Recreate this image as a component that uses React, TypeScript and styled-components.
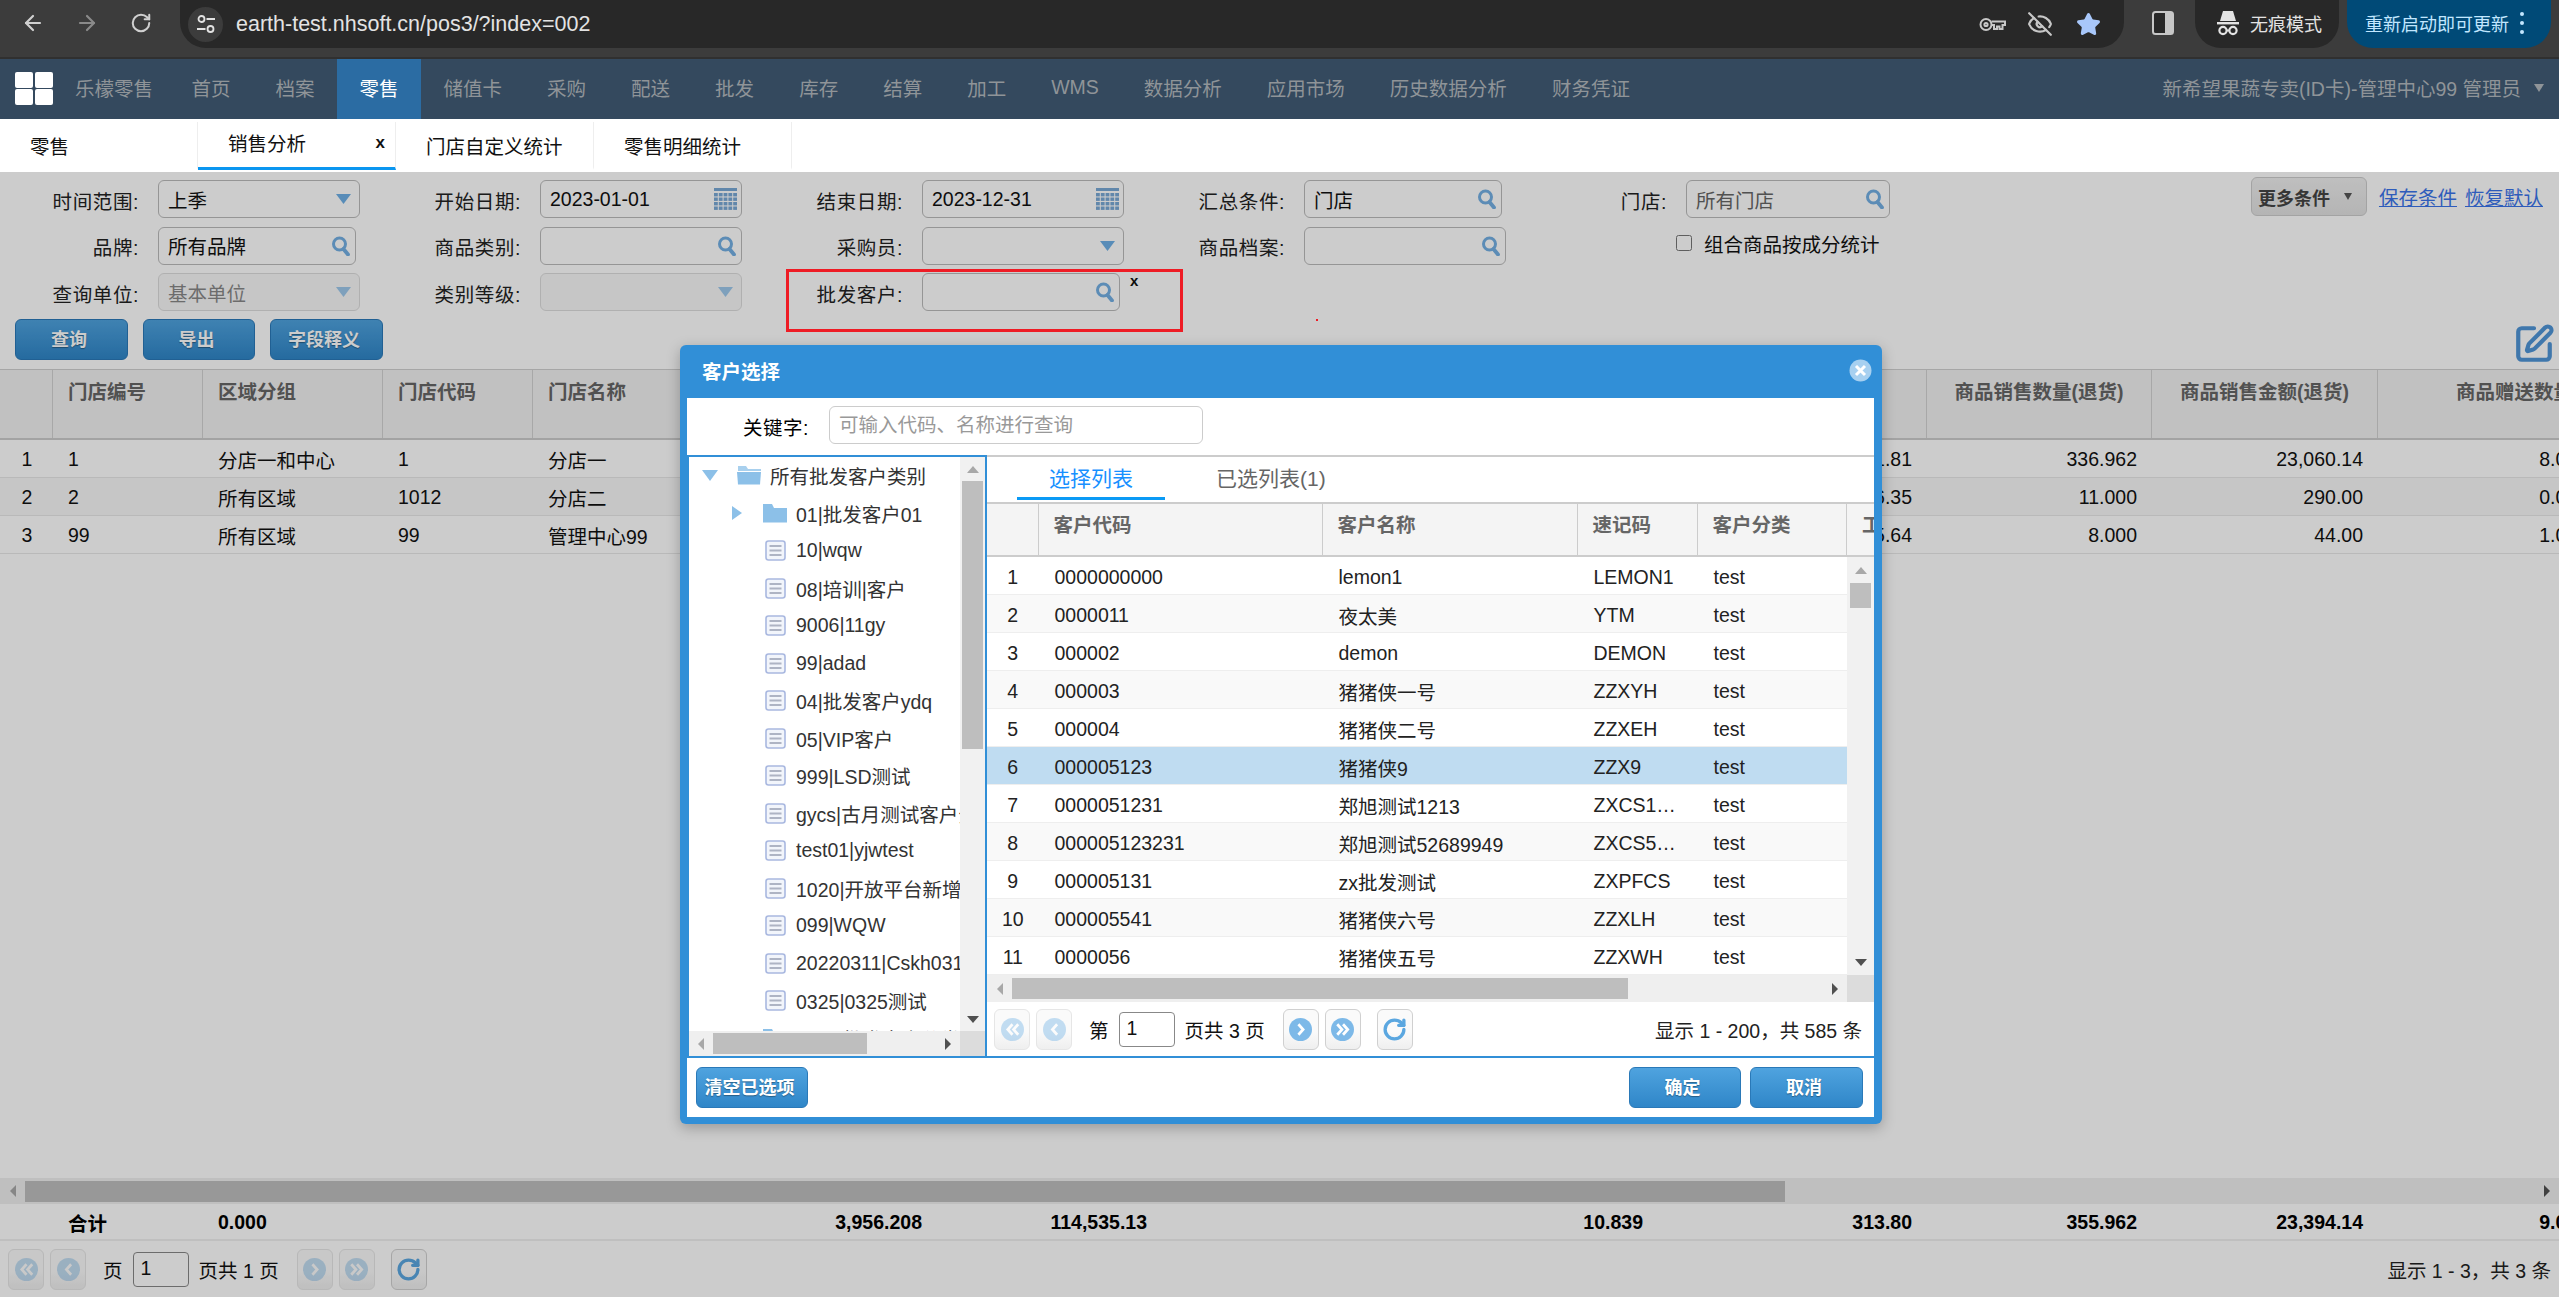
import React from 'react';
import styled, { createGlobalStyle } from 'styled-components';
import { ArrowLeft, ArrowRight, RotateCw, EyeOff, Star, SquarePen } from 'lucide-react';

const BLUE = '#318fd7';

const GlobalStyle = createGlobalStyle`
  html, body {
    margin: 0;
    width: 2559px;
    height: 1297px;
    overflow: hidden;
    background: #fff;
  }
  body, input, button {
    font-family: "Liberation Sans", "Noto Sans CJK SC", sans-serif;
    font-size: 19.5px;
    color: #222;
  }
  * { box-sizing: border-box; }
`;

const Page = styled.div`
  width: 2559px;
  height: 1297px;
  display: flex;
  flex-direction: column;
  overflow: hidden;
`;

/* browser bar */
const BrowserBar = styled.div`
  height: 59px;
  flex: none;
  display: flex;
  align-items: flex-start;
  padding-left: 6px;
  background: #3c3c3c;
  border-bottom: 2px solid #303030;
`;

const ChromeButton = styled.div<{ $dim?: boolean }>`
  width: 54px;
  height: 46px;
  display: flex;
  align-items: center;
  justify-content: center;
  color: ${p => (p.$dim ? '#8a8a8a' : '#d0d0d0')};
`;

const AddressBar = styled.div`
  width: 1944px;
  height: 48px;
  margin-left: 12px;
  padding: 0 12px 0 8px;
  display: flex;
  align-items: center;
  background: #282828;
  border-radius: 0 0 26px 26px;
`;

const TuneBadge = styled.div`
  width: 35px;
  height: 35px;
  border-radius: 50%;
  background: #3c3c3c;
  display: flex;
  align-items: center;
  justify-content: center;
`;

const Url = styled.span`
  margin-left: 13px;
  font-size: 21.5px;
  color: #e3e3e3;
`;

const AddressIcons = styled.div`
  margin-left: auto;
  display: flex;
`;

const AddressIcon = styled.div`
  width: 48px;
  height: 48px;
  display: flex;
  align-items: center;
  justify-content: center;
  color: #c7c7c7;
`;

const SidePanel = styled.div`
  margin: 11px 0 0 28px;
  line-height: 0;
`;

const Pill = styled.div<{ $update?: boolean }>`
  height: 48px;
  display: flex;
  align-items: center;
  margin-left: ${p => (p.$update ? '8px' : '21px')};
  width: ${p => (p.$update ? '204px' : '144px')};
  padding: 0 0 2px ${p => (p.$update ? '18px' : '21px')};
  gap: ${p => (p.$update ? '11px' : '10px')};
  font-size: 18px;
  color: ${p => (p.$update ? '#c2e7ff' : '#e3e3e3')};
  background: ${p => (p.$update ? '#004a77' : '#282828')};
  border-radius: 0 0 26px 26px;
`;

const UpdateDots = styled.div`
  display: flex;
  flex-direction: column;
  gap: 5px;
  i {
    width: 4px;
    height: 4px;
    border-radius: 50%;
    background: #c2e7ff;
  }
`;

/* app nav */
const Nav = styled.div`
  height: 60px;
  flex: none;
  display: flex;
  background: #34495e;
`;

const Logo = styled.div`
  margin: 13px 0 0 15px;
  width: 38px;
  height: 33px;
  display: grid;
  grid-template-columns: 18px 18px;
  grid-auto-rows: 16px;
  gap: 1px 2px;
  i {
    background: #fff;
    border-radius: 2px;
  }
`;

const NavItem = styled.div<{ $active?: boolean; $brand?: boolean }>`
  display: flex;
  align-items: center;
  padding: ${p => (p.$brand ? '0 16px 3px 22px' : '0 22.5px 3px')};
  color: ${p => (p.$active ? '#fff' : '#8f9498')};
  background: ${p => (p.$active ? '#2b6ca3' : 'transparent')};
  white-space: nowrap;
`;

const NavUser = styled.div`
  margin-left: auto;
  padding: 0 15px 3px 0;
  display: flex;
  align-items: center;
  color: #8f9498;
  white-space: nowrap;
  &::after {
    content: '';
    margin-left: 13px;
    border-style: solid;
    border-width: 8px 5px 0 5px;
    border-color: #8f9498 transparent transparent transparent;
  }
`;

/* page tabs */
const TabBar = styled.div`
  height: 53px;
  flex: none;
  display: flex;
  padding: 3px 0 2px;
  background: #fff;
`;

const PageTab = styled.div<{ $active?: boolean }>`
  width: 198px;
  display: flex;
  align-items: center;
  justify-content: space-between;
  padding: ${p => (p.$active ? '0 10px 4px 30px' : '2px 10px 0 30px')};
  border-right: 1px solid #eee;
  border-bottom: 3px solid ${p => (p.$active ? '#0a96f0' : 'transparent')};
  color: #111;
  white-space: nowrap;
  b {
    font-size: 17px;
  }
`;

/* content under the mask */
const Content = styled.div`
  flex: 1;
  min-height: 0;
  position: relative;
  display: flex;
  flex-direction: column;
`;

const Mask = styled.div`
  position: absolute;
  inset: 0;
  z-index: 10;
  background: rgba(0, 0, 0, 0.2);
`;

const FilterArea = styled.div`
  height: 197px;
  flex: none;
  display: flex;
`;

const FilterLeft = styled.div`
  width: 1910px;
  flex: none;
  padding-top: 8px;
`;

const FilterGrid = styled.div`
  display: grid;
  grid-template-columns: repeat(5, 382px);
  grid-auto-rows: 38px;
  row-gap: 8.5px;
`;

const FieldCell = styled.div<{ $flagged?: boolean }>`
  position: relative;
  display: flex;
  align-items: center;
  ${p =>
    p.$flagged &&
    `&::after {
      content: '';
      box-sizing: border-box;
      position: absolute;
      left: 22px;
      top: -4px;
      width: 397px;
      height: 63px;
      border: 3px solid #ee1c25;
      z-index: 11;
    }`}
`;

const FieldLabel = styled.label`
  width: 139px;
  flex: none;
  margin-right: 19px;
  padding-top: 2px;
  text-align: right;
  white-space: nowrap;
  letter-spacing: 0.6px;
  color: #222;
`;

const Control = styled.div<{ $w?: number; $off?: boolean }>`
  width: ${p => p.$w ?? 202}px;
  height: 38px;
  display: flex;
  align-items: center;
  justify-content: space-between;
  padding: 0 4px 0 9px;
  background: ${p => (p.$off ? '#f8f8f8' : 'transparent')};
  border: 1px solid ${p => (p.$off ? '#ddd' : '#bbb')};
  border-radius: 6px;
  white-space: nowrap;
  color: ${p => (p.$off ? '#888' : '#111')};
`;

const PlaceholderText = styled.span`
  color: #666;
`;

const Dismiss = styled.span`
  align-self: flex-start;
  margin: -1px 0 0 10px;
  font-size: 15px;
  font-weight: bold;
  color: #111;
`;

const Speck = styled.span`
  display: block;
  position: relative;
  z-index: 11;
  width: 2px;
  height: 2px;
  margin: 46px 0 0 170px;
  background: #ee1c25;
`;

const CheckLine = styled.label`
  display: flex;
  align-items: center;
  padding: 0 0 5px 148px;
  color: #111;
  white-space: nowrap;
  input {
    width: 16px;
    height: 16px;
    margin: 0 12px 0 0;
  }
`;

const ActionRow = styled.div`
  display: flex;
  gap: 15px;
  margin-top: 8px;
  padding-left: 15px;
`;

const BlueButton = styled.button<{ $w: number }>`
  width: ${p => p.$w}px;
  height: 41px;
  padding: 0 5px 3px 0;
  font-size: 18px;
  font-weight: bold;
  color: #fff;
  text-shadow: 0 1px 1px rgba(0, 0, 0, 0.35);
  background: linear-gradient(#4fa3df, #2f86c8);
  border: 1px solid #2a79b8;
  border-radius: 6px;
`;

const FilterRight = styled.div`
  flex: 1;
  display: flex;
  flex-direction: column;
  padding: 5px 4px 4px 0;
`;

const TopTools = styled.div`
  display: flex;
  align-items: center;
  justify-content: flex-end;
  padding-right: 12px;
`;

const MoreButton = styled.div`
  width: 116px;
  height: 39px;
  display: flex;
  align-items: center;
  padding-left: 6px;
  gap: 14px;
  font-size: 18px;
  font-weight: bold;
  color: #444;
  background: linear-gradient(#efefef, #e2e2e2);
  border: 1px solid #ccc;
  border-radius: 6px;
  &::after {
    content: '';
    border-style: solid;
    border-width: 7px 4px 0 4px;
    border-color: #555 transparent transparent transparent;
  }
`;

const SaveLink = styled.a`
  margin-left: 12px;
  color: #3a74ea;
  text-decoration: underline;
  white-space: nowrap;
  & + & {
    margin-left: 8px;
  }
`;

const EditIcon = styled.div`
  margin-top: auto;
  align-self: flex-end;
  line-height: 0;
  color: #4f95d8;
`;

/* main table */
const MAIN_COLS = '53px 150px 180px 150px 404px 225px 225px 271px 269px 225px 226px 225px';

const TableWrap = styled.div`
  flex: 1;
  min-height: 0;
  overflow: hidden;
`;

const HeadRow = styled.div`
  height: 71px;
  display: grid;
  grid-template-columns: ${MAIN_COLS};
  background: #f2f2f2;
  border-top: 1px solid #d0d0d0;
  border-bottom: 2px solid #ccc;
`;

const HeadCell = styled.div<{ $center?: boolean; $indent?: number }>`
  padding: 9px 0 0 ${p => p.$indent ?? 15}px;
  line-height: 26px;
  font-weight: bold;
  color: #666;
  white-space: nowrap;
  border-right: 1px solid #d2d2d2;
  ${p => p.$center && 'padding-left: 0; text-align: center;'}
`;

const BodyRow = styled.div<{ $stripe?: boolean }>`
  height: 38px;
  display: grid;
  grid-template-columns: ${MAIN_COLS};
  align-items: center;
  color: #111;
  background: ${p => (p.$stripe ? '#f8f8f8' : '#fff')};
  border-bottom: 1px solid #e8e8e8;
`;

const SummaryRow = styled(BodyRow)`
  flex: none;
  height: 37px;
  font-weight: bold;
  color: #000;
  border-bottom: 2px solid #efefef;
`;

const BodyCell = styled.div<{ $right?: boolean; $center?: boolean }>`
  padding: 2px 15px 0;
  text-align: ${p => (p.$right ? 'right' : p.$center ? 'center' : 'left')};
  white-space: nowrap;
  ${p => p.$center && 'padding: 2px 0 0 1px;'}
`;

/* scrollbars */
const VTrack = styled.div<{ $w: number }>`
  width: ${p => p.$w}px;
  flex: none;
  display: flex;
  flex-direction: column;
  align-items: center;
  background: #f1f1f1;
`;

const HTrack = styled.div<{ $h: number }>`
  height: ${p => p.$h}px;
  flex: 1;
  min-width: 0;
  display: flex;
  align-items: center;
  background: #efefef;
`;

const ArrowBox = styled.div<{ $size: number; $vertical?: boolean }>`
  flex: none;
  display: flex;
  align-items: center;
  justify-content: center;
  ${p => (p.$vertical ? `height: ${p.$size}px; width: 100%;` : `width: ${p.$size}px; height: 100%;`)}
`;

const Thumb = styled.div<{ $len: number; $cross: number; $vertical?: boolean }>`
  flex: none;
  background: #bebebe;
  ${p =>
    p.$vertical
      ? `height: ${p.$len}px; width: ${p.$cross}px;`
      : `width: ${p.$len}px; height: ${p.$cross}px;`}
`;

const Gap = styled.div`
  flex: 1;
`;

const Tri = styled.i<{ $dir: 'up' | 'down' | 'left' | 'right'; $off?: boolean }>`
  width: 0;
  height: 0;
  border-style: solid;
  ${p => {
    const c = p.$off ? '#a8a8a8' : '#505050';
    if (p.$dir === 'up') return `border-width: 0 6px 7px 6px; border-color: transparent transparent ${c} transparent;`;
    if (p.$dir === 'down') return `border-width: 7px 6px 0 6px; border-color: ${c} transparent transparent transparent;`;
    if (p.$dir === 'left') return `border-width: 6px 6px 6px 0; border-color: transparent ${c} transparent transparent;`;
    return `border-width: 6px 0 6px 6px; border-color: transparent transparent transparent ${c};`;
  }}
`;

const ScrollCorner = styled.div<{ $w: number }>`
  width: ${p => p.$w}px;
  flex: none;
  background: #dcdcdc;
`;

const HBarRow = styled.div`
  flex: none;
  display: flex;
`;

function VScroll({ w, arrow, len, cross }: { w: number; arrow: number; len: number; cross: number }) {
  return (
    <VTrack $w={w}>
      <ArrowBox $size={arrow} $vertical><Tri $dir="up" $off /></ArrowBox>
      <Thumb $vertical $len={len} $cross={cross} />
      <Gap />
      <ArrowBox $size={arrow} $vertical><Tri $dir="down" /></ArrowBox>
    </VTrack>
  );
}

function HScroll({ h, arrow, len, cross }: { h: number; arrow: number; len: number; cross: number }) {
  return (
    <HTrack $h={h}>
      <ArrowBox $size={arrow}><Tri $dir="left" $off /></ArrowBox>
      <Thumb $len={len} $cross={cross} />
      <Gap />
      <ArrowBox $size={arrow}><Tri $dir="right" /></ArrowBox>
    </HTrack>
  );
}

/* pager */
const PagerBar = styled.div<{ $h: number; $pad: number; $end: number }>`
  height: ${p => p.$h}px;
  flex: none;
  display: flex;
  align-items: center;
  gap: 6px;
  padding: 0 ${p => p.$end}px 0 ${p => p.$pad}px;
  white-space: nowrap;
`;

const PageButton = styled.div<{ $off?: boolean; $gapLeft?: number }>`
  width: 36px;
  height: 41px;
  flex: none;
  display: flex;
  align-items: center;
  justify-content: center;
  margin-left: ${p => p.$gapLeft ?? 0}px;
  background: linear-gradient(#fafafa 55%, #efefef);
  border: 1px solid ${p => (p.$off ? '#e6e6e6' : '#d0d0d0')};
  border-radius: 6px;
  svg {
    opacity: ${p => (p.$off ? 0.45 : 1)};
  }
`;

const PageText = styled.span<{ $gapLeft: number }>`
  margin-left: ${p => p.$gapLeft}px;
  color: #111;
`;

const PageInput = styled.div`
  width: 56px;
  height: 35px;
  margin-left: 4px;
  padding-left: 7px;
  line-height: 31px;
  border: 1px solid #888;
  border-radius: 4px;
  color: #111;
`;

const PageInfo = styled.span`
  margin-left: auto;
  color: #222;
`;

/* dialog */
const Dialog = styled.div`
  position: absolute;
  left: 680px;
  top: 173px;
  z-index: 12;
  width: 1202px;
  height: 779px;
  display: flex;
  flex-direction: column;
  padding: 0 8px 7px 7px;
  background: ${BLUE};
  border-radius: 6px;
  box-shadow: 0 4px 14px rgba(0, 0, 0, 0.25);
`;

const DialogHead = styled.div`
  height: 53px;
  flex: none;
  display: flex;
  align-items: center;
  justify-content: space-between;
  padding: 0 2px 3px 15px;
  font-weight: bold;
  color: #fff;
`;

const DialogBody = styled.div`
  flex: 1;
  min-height: 0;
  display: flex;
  flex-direction: column;
  background: #fff;
`;

const KeywordRow = styled.div`
  height: 57px;
  flex: none;
  display: flex;
  align-items: center;
  padding-left: 56px;
  letter-spacing: 0.5px;
  color: #000;
`;

const KeywordInput = styled.div`
  width: 374px;
  height: 38px;
  margin: -3px 0 0 20px;
  padding-left: 9px;
  line-height: 36px;
  letter-spacing: 0;
  color: #999;
  border: 1px solid #ccc;
  border-radius: 6px;
`;

const Panels = styled.div`
  height: 603px;
  flex: none;
  display: flex;
`;

const TreePanel = styled.div`
  width: 300px;
  flex: none;
  display: flex;
  flex-direction: column;
  border: 2px solid ${BLUE};
`;

const TreeMain = styled.div`
  flex: 1;
  min-height: 0;
  display: flex;
`;

const TreeList = styled.div`
  flex: 1;
  min-width: 0;
  overflow: hidden;
`;

const TreeRow = styled.div<{ $pad: number }>`
  height: 37.5px;
  display: flex;
  align-items: center;
  padding-left: ${p => p.$pad}px;
  white-space: nowrap;
  color: #333;
`;

const Twisty = styled.span<{ $w: number }>`
  width: ${p => p.$w}px;
  flex: none;
  display: flex;
  align-items: center;
`;

const TwistyDown = styled.i`
  width: 0;
  height: 0;
  border-style: solid;
  border-width: 11px 8px 0;
  border-color: #8cc0e8 transparent transparent;
`;

const TwistyRight = styled.i`
  width: 0;
  height: 0;
  border-style: solid;
  border-width: 7px 0 7px 10px;
  border-color: transparent transparent transparent #8cc0e8;
`;

const TreeIcon = styled.span<{ $gap: number }>`
  flex: none;
  margin-right: ${p => p.$gap}px;
  line-height: 0;
`;

const RightPanel = styled.div`
  flex: 1;
  min-width: 0;
  display: flex;
  flex-direction: column;
  border-top: 2px solid #ccc;
  border-bottom: 2px solid ${BLUE};
`;

const ListTabs = styled.div`
  height: 45px;
  flex: none;
  display: flex;
  padding-left: 30px;
  font-size: 21px;
`;

const ListTab = styled.div<{ $active?: boolean }>`
  height: 43px;
  padding: ${p => (p.$active ? '0 32px' : '0 51px')};
  display: flex;
  align-items: center;
  color: ${p => (p.$active ? '#1890ff' : '#666')};
  border-bottom: 3px solid ${p => (p.$active ? '#0a9af5' : 'transparent')};
`;

const PICK_COLS = '51.5px 284px 255px 120px 149.5px 60px';

const PickHead = styled.div`
  height: 55px;
  flex: none;
  display: grid;
  grid-template-columns: ${PICK_COLS};
  overflow: hidden;
  background: #f4f4f4;
  border-top: 2px solid #ccc;
  border-bottom: 2px solid #ccc;
`;

const PickHeadCell = styled.div`
  padding: 8px 0 0 15px;
  line-height: 26px;
  font-weight: bold;
  color: #666;
  white-space: nowrap;
  border-right: 1px solid #ccc;
`;

const PickBody = styled.div`
  height: 418px;
  flex: none;
  display: flex;
`;

const PickRows = styled.div`
  flex: 1;
  min-width: 0;
`;

const PickRow = styled.div<{ $stripe?: boolean; $selected?: boolean }>`
  height: 38px;
  display: grid;
  grid-template-columns: ${PICK_COLS};
  align-items: center;
  background: ${p => (p.$selected ? '#bfdcf1' : p.$stripe ? '#f9f9f9' : '#fff')};
  border-bottom: 1px solid #eee;
`;

const PickCell = styled.div<{ $center?: boolean }>`
  padding: 3px ${p => (p.$center ? '0' : '16px')} 0;
  text-align: ${p => (p.$center ? 'center' : 'left')};
  overflow: hidden;
  white-space: nowrap;
  text-overflow: ellipsis;
  color: #222;
`;

const DialogFoot = styled.div`
  flex: 1;
  display: flex;
  align-items: center;
  justify-content: space-between;
  padding: 0 11px 0 9px;
`;

const FootRight = styled.div`
  display: flex;
  gap: 9px;
`;

/* small drawings */
const SearchIcon = () => (
  <svg width="20" height="20" viewBox="0 0 20 20" fill="none">
    <circle cx="8.5" cy="8" r="6" stroke="#74b0e4" strokeWidth="3" />
    <path d="M12.5 13 L17 18.5" stroke="#74b0e4" strokeWidth="3.8" strokeLinecap="round" />
  </svg>
);

const DropSvg = styled.svg<{ $off?: boolean }>`
  margin-right: 4px;
  opacity: ${p => (p.$off ? 0.65 : 1)};
`;

const DropIcon = ({ off }: { off?: boolean }) => (
  <DropSvg $off={off} width="15" height="10" viewBox="0 0 15 10">
    <polygon points="0,0 15,0 7.5,10" fill="#6fb0e6" />
  </DropSvg>
);

const CalendarIcon = () => (
  <svg width="23" height="22" viewBox="0 0 23 22">
    <rect x="0" y="0" width="23" height="3" fill="#7aa9d6" />
    {[5, 9.5, 14, 18.5].map(y =>
      [0, 4.8, 9.6, 14.4, 19.2].map(x => (
        <rect key={`${x}-${y}`} x={x} y={y} width="3.8" height="3.4" fill="#7aa9d6" />
      ))
    )}
  </svg>
);

const TuneIcon = () => (
  <svg width="20" height="20" viewBox="0 0 20 20" fill="none" stroke="#e3e3e3" strokeWidth="1.8">
    <circle cx="5.5" cy="5" r="3" />
    <path d="M10.5 5H19M1 15H9.5" />
    <circle cx="14.5" cy="15" r="3" />
  </svg>
);

const KeyIcon = () => (
  <svg width="27" height="15" viewBox="0 0 27 15" fill="none" stroke="#c7c7c7" strokeWidth="2">
    <circle cx="7" cy="7.5" r="5.5" />
    <circle cx="7" cy="7.5" r="1.6" />
    <path d="M12.5 4.5H26V8H23.5V12H20.5V9.5H18V12H15V8H12.5" />
  </svg>
);

const SidePanelIcon = () => (
  <svg width="22" height="24" viewBox="0 0 22 24">
    <rect x="1" y="1" width="20" height="22" rx="2.5" fill="#282828" stroke="#c7c7c7" strokeWidth="2" />
    <rect x="13" y="1" width="8" height="22" fill="#c7c7c7" />
  </svg>
);

const IncognitoIcon = () => (
  <svg width="24" height="26" viewBox="0 0 24 26" fill="#e3e3e3">
    <path d="M7 1H17L20 11H4Z" />
    <rect x="1" y="12" width="22" height="2.4" />
    <circle cx="7" cy="20.5" r="3.6" fill="none" stroke="#e3e3e3" strokeWidth="2.2" />
    <circle cx="17" cy="20.5" r="3.6" fill="none" stroke="#e3e3e3" strokeWidth="2.2" />
    <rect x="10" y="19.5" width="4" height="2" />
  </svg>
);

const FolderIcon = ({ open }: { open?: boolean }) => (
  <svg width="24" height="19" viewBox="0 0 24 19">
    {open ? (
      <>
        <path d="M1 0H9L11 3H24V5H1Z" fill="#a8d0ee" />
        <path d="M0 6H24L23 18.5H1Z" fill="#8cc0e8" />
      </>
    ) : (
      <path d="M0 0H9L11 4H24V18.5H0Z" fill="#8cc0e8" />
    )}
  </svg>
);

const LeafIcon = () => (
  <svg width="21" height="21" viewBox="0 0 21 21" fill="none">
    <rect x="1" y="1" width="19" height="19" rx="2.5" fill="#f2f5fb" stroke="#a9b8e0" strokeWidth="1.6" />
    <path d="M4.5 6H16.5M4.5 10.5H16.5M4.5 15H16.5" stroke="#aeb4c4" strokeWidth="2" />
  </svg>
);

const PageGlyph = ({ kind }: { kind: 'first' | 'prev' | 'next' | 'last' }) => {
  const chevrons: Record<string, string> = {
    first: 'M11 6 L6.5 11 L11 16 M16.5 6 L12 11 L16.5 16',
    prev: 'M13.5 6 L9 11 L13.5 16',
    next: 'M9 6 L13.5 11 L9 16',
    last: 'M6 6 L10.5 11 L6 16 M11.5 6 L16 11 L11.5 16',
  };
  return (
    <svg width="23" height="23" viewBox="0 0 22 22" fill="none">
      <circle cx="11" cy="11" r="11" fill="#7db9e8" />
      <path d={chevrons[kind]} stroke="#fff" strokeWidth="2.6" />
    </svg>
  );
};

const CloseIcon = () => (
  <svg width="23" height="23" viewBox="0 0 23 23" fill="none">
    <circle cx="11.5" cy="11.5" r="11" fill="#a7d0f0" />
    <path d="M7 7L16 16M16 7L7 16" stroke="#fff" strokeWidth="3" />
  </svg>
);

const navItems = ['首页', '档案', '零售', '储值卡', '采购', '配送', '批发', '库存', '结算', '加工', 'WMS', '数据分析', '应用市场', '历史数据分析', '财务凭证'];

const mainRows = [
  ['1', '1', '分店一和中心', '1', '分店一', '', '', '', '261.81', '336.962', '23,060.14', '8.000'],
  ['2', '2', '所有区域', '1012', '分店二', '', '', '', '46.35', '11.000', '290.00', '0.000'],
  ['3', '99', '所有区域', '99', '管理中心99', '', '', '', '5.64', '8.000', '44.00', '1.000'],
];

const summary = ['', '合计', '0.000', '', '3,956.208', '114,535.13', '', '10.839', '313.80', '355.962', '23,394.14', '9.000'];

const pickRows = [
  ['0000000000', 'lemon1', 'LEMON1'],
  ['0000011', '夜太美', 'YTM'],
  ['000002', 'demon', 'DEMON'],
  ['000003', '猪猪侠一号', 'ZZXYH'],
  ['000004', '猪猪侠二号', 'ZZXEH'],
  ['000005123', '猪猪侠9', 'ZZX9'],
  ['0000051231', '郑旭测试1213', 'ZXCS1213'],
  ['000005123231', '郑旭测试52689949', 'ZXCS52689949'],
  ['000005131', 'zx批发测试', 'ZXPFCS'],
  ['000005541', '猪猪侠六号', 'ZZXLH'],
  ['0000056', '猪猪侠五号', 'ZZXWH'],
];

const leaves = ['10|wqw', '08|培训|客户', '9006|11gy', '99|adad', '04|批发客户ydq', '05|VIP客户', '999|LSD测试', 'gycs|古月测试客户分类', 'test01|yjwtest', '1020|开放平台新增分类', '099|WQW', '20220311|Cskh0311', '0325|0325测试'];

function Field({ label, children, flagged }: { label: string; children: React.ReactNode; flagged?: boolean }) {
  return (
    <FieldCell $flagged={flagged}>
      <FieldLabel>{label}</FieldLabel>
      {children}
    </FieldCell>
  );
}

function Pager({ prefix, total, info, nextOn, h, pad, end }: { prefix: string; total: string; info: string; nextOn?: boolean; h: number; pad: number; end: number }) {
  return (
    <PagerBar $h={h} $pad={pad} $end={end}>
      <PageButton $off><PageGlyph kind="first" /></PageButton>
      <PageButton $off><PageGlyph kind="prev" /></PageButton>
      <PageText $gapLeft={11}>{prefix}</PageText>
      <PageInput>1</PageInput>
      <PageText $gapLeft={4}>{total}</PageText>
      <PageButton $off={!nextOn} $gapLeft={12}><PageGlyph kind="next" /></PageButton>
      <PageButton $off={!nextOn}><PageGlyph kind="last" /></PageButton>
      <PageButton $gapLeft={10}><RotateCw size={25} color="#5ba7e0" strokeWidth={3.2} /></PageButton>
      <PageInfo>{info}</PageInfo>
    </PagerBar>
  );
}

export default function App() {
  return (
    <Page>
      <GlobalStyle />

      <BrowserBar>
        <ChromeButton><ArrowLeft size={24} strokeWidth={2.2} /></ChromeButton>
        <ChromeButton $dim><ArrowRight size={24} strokeWidth={2.2} /></ChromeButton>
        <ChromeButton><RotateCw size={22} strokeWidth={2.2} /></ChromeButton>
        <AddressBar>
          <TuneBadge><TuneIcon /></TuneBadge>
          <Url>earth-test.nhsoft.cn/pos3/?index=002</Url>
          <AddressIcons>
            <AddressIcon><KeyIcon /></AddressIcon>
            <AddressIcon><EyeOff size={26} strokeWidth={2} /></AddressIcon>
            <AddressIcon><Star size={25} fill="#a8c7fa" color="#a8c7fa" /></AddressIcon>
          </AddressIcons>
        </AddressBar>
        <SidePanel><SidePanelIcon /></SidePanel>
        <Pill><IncognitoIcon />无痕模式</Pill>
        <Pill $update>
          重新启动即可更新
          <UpdateDots><i /><i /><i /></UpdateDots>
        </Pill>
      </BrowserBar>

      <Nav>
        <Logo><i /><i /><i /><i /></Logo>
        <NavItem $brand>乐檬零售</NavItem>
        {navItems.map(item => (
          <NavItem key={item} $active={item === '零售'}>{item}</NavItem>
        ))}
        <NavUser>新希望果蔬专卖(ID卡)-管理中心99 管理员</NavUser>
      </Nav>

      <TabBar>
        <PageTab>零售</PageTab>
        <PageTab $active>销售分析<b>x</b></PageTab>
        <PageTab>门店自定义统计</PageTab>
        <PageTab>零售明细统计</PageTab>
      </TabBar>

      <Content>
        <FilterArea>
          <FilterLeft>
            <FilterGrid>
              <Field label="时间范围:"><Control>上季<DropIcon /></Control></Field>
              <Field label="开始日期:"><Control>2023-01-01<CalendarIcon /></Control></Field>
              <Field label="结束日期:"><Control>2023-12-31<CalendarIcon /></Control></Field>
              <Field label="汇总条件:"><Control $w={198}>门店<SearchIcon /></Control></Field>
              <Field label="门店:"><Control $w={204}><PlaceholderText>所有门店</PlaceholderText><SearchIcon /></Control></Field>

              <Field label="品牌:"><Control $w={198}>所有品牌<SearchIcon /></Control></Field>
              <Field label="商品类别:"><Control><span /><SearchIcon /></Control></Field>
              <Field label="采购员:"><Control><span /><DropIcon /></Control></Field>
              <Field label="商品档案:"><Control><span /><SearchIcon /></Control></Field>
              <CheckLine><input type="checkbox" />组合商品按成分统计</CheckLine>

              <Field label="查询单位:"><Control $off>基本单位<DropIcon off /></Control></Field>
              <Field label="类别等级:"><Control $off><span /><DropIcon off /></Control></Field>
              <Field label="批发客户:" flagged>
                <Control $w={198}><span /><SearchIcon /></Control>
                <Dismiss>x</Dismiss>
              </Field>
              <div><Speck /></div>
            </FilterGrid>
            <ActionRow>
              <BlueButton $w={113}>查询</BlueButton>
              <BlueButton $w={112}>导出</BlueButton>
              <BlueButton $w={113}>字段释义</BlueButton>
            </ActionRow>
          </FilterLeft>
          <FilterRight>
            <TopTools>
              <MoreButton>更多条件</MoreButton>
              <SaveLink>保存条件</SaveLink>
              <SaveLink>恢复默认</SaveLink>
            </TopTools>
            <EditIcon><SquarePen size={42} strokeWidth={2.4} /></EditIcon>
          </FilterRight>
        </FilterArea>

        <TableWrap>
          <HeadRow>
            <HeadCell />
            <HeadCell>门店编号</HeadCell>
            <HeadCell>区域分组</HeadCell>
            <HeadCell>门店代码</HeadCell>
            <HeadCell>门店名称</HeadCell>
            <HeadCell />
            <HeadCell />
            <HeadCell />
            <HeadCell $center>商品销售金额(销售)</HeadCell>
            <HeadCell $center>商品销售数量(退货)</HeadCell>
            <HeadCell $center>商品销售金额(退货)</HeadCell>
            <HeadCell $indent={78}>商品赠送数量(退货)</HeadCell>
          </HeadRow>
          {mainRows.map((row, i) => (
            <BodyRow key={row[0]} $stripe={i === 1}>
              {row.map((value, c) => (
                <BodyCell key={c} $center={c === 0} $right={c >= 5}>{value}</BodyCell>
              ))}
            </BodyRow>
          ))}
        </TableWrap>

        <HBarRow>
          <HScroll h={26} arrow={25} len={1760} cross={21} />
        </HBarRow>
        <SummaryRow>
          {summary.map((value, c) => (
            <BodyCell key={c} $right={c >= 4}>{value}</BodyCell>
          ))}
        </SummaryRow>
        <Pager prefix="页" total="页共 1 页" info="显示 1 - 3，共 3 条" h={56} pad={8} end={8} />

        <Mask />

        <Dialog>
          <DialogHead>客户选择<CloseIcon /></DialogHead>
          <DialogBody>
            <KeywordRow>
              关键字:
              <KeywordInput>可输入代码、名称进行查询</KeywordInput>
            </KeywordRow>
            <Panels>
              <TreePanel>
                <TreeMain>
                  <TreeList>
                    <TreeRow $pad={13}>
                      <Twisty $w={35}><TwistyDown /></Twisty>
                      <TreeIcon $gap={9}><FolderIcon open /></TreeIcon>
                      所有批发客户类别
                    </TreeRow>
                    <TreeRow $pad={43}>
                      <Twisty $w={31}><TwistyRight /></Twisty>
                      <TreeIcon $gap={9}><FolderIcon /></TreeIcon>
                      01|批发客户01
                    </TreeRow>
                    {leaves.map(leaf => (
                      <TreeRow key={leaf} $pad={76}>
                        <TreeIcon $gap={10}><LeafIcon /></TreeIcon>
                        {leaf}
                      </TreeRow>
                    ))}
                    <TreeRow $pad={43}>
                      <Twisty $w={31}><TwistyRight /></Twisty>
                      <TreeIcon $gap={9}><FolderIcon /></TreeIcon>
                      1126|批发客户分类
                    </TreeRow>
                  </TreeList>
                  <VScroll w={25} arrow={24} len={268} cross={21} />
                </TreeMain>
                <HBarRow>
                  <HScroll h={25} arrow={24} len={154} cross={21} />
                  <ScrollCorner $w={25} />
                </HBarRow>
              </TreePanel>

              <RightPanel>
                <ListTabs>
                  <ListTab $active>选择列表</ListTab>
                  <ListTab>已选列表(1)</ListTab>
                </ListTabs>
                <PickHead>
                  <PickHeadCell />
                  <PickHeadCell>客户代码</PickHeadCell>
                  <PickHeadCell>客户名称</PickHeadCell>
                  <PickHeadCell>速记码</PickHeadCell>
                  <PickHeadCell>客户分类</PickHeadCell>
                  <PickHeadCell>工商</PickHeadCell>
                </PickHead>
                <PickBody>
                  <PickRows>
                    {pickRows.map((row, i) => (
                      <PickRow key={row[0]} $stripe={i % 2 === 1} $selected={i === 5}>
                        <PickCell $center>{i + 1}</PickCell>
                        <PickCell>{row[0]}</PickCell>
                        <PickCell>{row[1]}</PickCell>
                        <PickCell>{row[2]}</PickCell>
                        <PickCell>test</PickCell>
                      </PickRow>
                    ))}
                  </PickRows>
                  <VScroll w={27} arrow={26} len={25} cross={21} />
                </PickBody>
                <HBarRow>
                  <HScroll h={27} arrow={25} len={616} cross={21} />
                  <ScrollCorner $w={27} />
                </HBarRow>
                <Pager prefix="第" total="页共 3 页" info="显示 1 - 200，共 585 条" nextOn h={55} pad={7} end={12} />
              </RightPanel>
            </Panels>
            <DialogFoot>
              <BlueButton $w={112}>清空已选项</BlueButton>
              <FootRight>
                <BlueButton $w={112}>确定</BlueButton>
                <BlueButton $w={113}>取消</BlueButton>
              </FootRight>
            </DialogFoot>
          </DialogBody>
        </Dialog>
      </Content>
    </Page>
  );
}
